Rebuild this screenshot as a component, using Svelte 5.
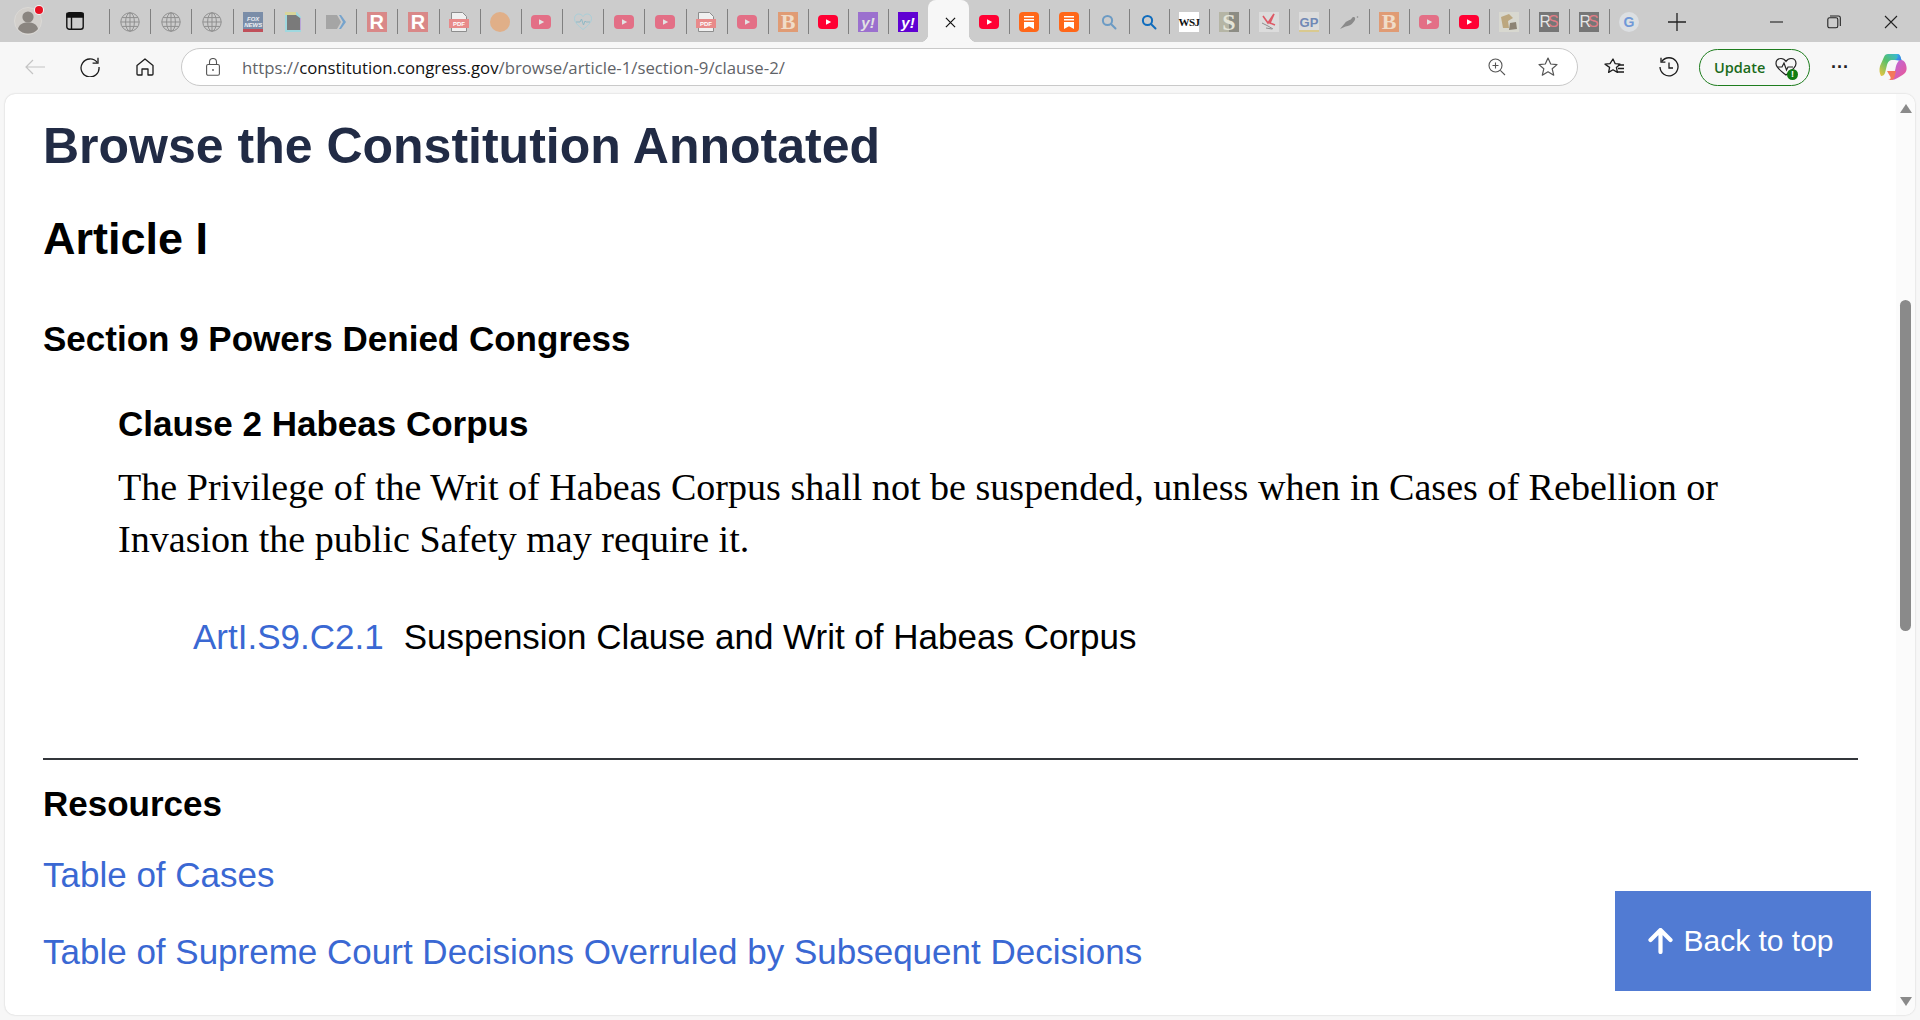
<script lang="ts">
  // kind of favicon for each pinned tab, left to right
  const leftTabs = [
    'globe', 'globe', 'globe', 'fox', 'doc', 'tag', 'r', 'r', 'pdf', 'dot',
    'yt-dim', 'heart', 'yt-dim', 'yt-dim', 'pdf', 'yt-dim',
  ];
  const slimLeft = ['b', 'yt', 'yahoo-dim', 'yahoo'];
  const rightTabs = [
    'yt', 'save', 'save', 'search-dim', 'search', 'wsj', 's', 'bird', 'gp', 'pigeon',
    'b', 'yt-dim', 'yt', 'photo', 'rs', 'rs', 'g',
  ];
</script>

{#snippet favicon(kind: string)}
  {#if kind === 'globe'}
    <svg class="fav" viewBox="0 0 20 20" fill="none" stroke="#8f8f8f" stroke-width="1">
      <circle cx="10" cy="10" r="9.2" />
      <ellipse cx="10" cy="10" rx="4.4" ry="9.2" />
      <path d="M.8 10h18.4M2 5.6h16M2 14.4h16M10 .8v18.4" />
    </svg>
  {:else if kind === 'fox'}
    <span class="fav fox"><i>FOX</i><i>NEWS</i></span>
  {:else if kind === 'doc'}
    <svg class="fav" viewBox="0 0 20 20">
      <path d="M1 0h12l4 5v15H1z" fill="#9fd8df" />
      <path d="M1 0h11v3H1z" fill="#d8d59a" />
      <path d="M3 3h9l4 3v12H3z" fill="#7a7a7a" />
      <path d="M16 6v12h1V6z" fill="#b9a6d8" />
    </svg>
  {:else if kind === 'tag'}
    <svg class="fav" viewBox="0 0 20 20">
      <path d="M0 3h11l4 7-4 7H0z" fill="#a5a5a5" />
      <path d="M13 3h2l5 7-5 7h-2l4-7z" fill="#76a3cc" />
    </svg>
  {:else if kind === 'r'}
    <span class="fav letter red">R</span>
  {:else if kind === 'pdf'}
    <svg class="fav" viewBox="0 0 20 20">
      <path d="M2.5.5h11l4 4v15h-15z" fill="#f0f0f0" stroke="#8d8d8d" />
      <path d="M0 7h20v9H0z" fill="#e88a8a" />
      <text x="10" y="14.2" text-anchor="middle" class="pdf-text">PDF</text>
    </svg>
  {:else if kind === 'dot'}
    <span class="fav dot"></span>
  {:else if kind === 'yt' || kind === 'yt-dim'}
    <svg class="fav" class:dim={kind === 'yt-dim'} viewBox="0 0 20 20">
      <rect x="0" y="3" width="20" height="14" rx="4" fill="#ff0033" />
      <path d="M8 7.2l5.2 2.8L8 12.8z" fill="#fff" />
    </svg>
  {:else if kind === 'heart'}
    <svg class="fav" viewBox="0 0 20 20" fill="none" stroke="#a9cfd9" stroke-width="1">
      <path d="M10 17.500C5 13.500 1.500 10.500 1.500 6.500 1.500 3.500 3.500 2 5.800 2 7.500 2 9 3 10 4.500 11 3 12.500 2 14.200 2 16.500 2 18.500 3.500 18.500 6.500 18.500 10.500 15 13.500 10 17.500z" />
      <path d="M3 10h4l1.500-3 2 6 1.500-4 1 1h4" stroke="#8fb9c6" />
    </svg>
  {:else if kind === 'b'}
    <span class="fav letter rumble">B</span>
  {:else if kind === 'yahoo' || kind === 'yahoo-dim'}
    <span class="fav yahoo" class:dim={kind === 'yahoo-dim'}>y!</span>
  {:else if kind === 'save'}
    <svg class="fav" viewBox="0 0 20 20">
      <rect width="20" height="20" rx="4" fill="#ff6719" />
      <path d="M5 4h10v1.500H5zM5 7h10v1.500H5zM5 10h10v7l-5-2.800L5 17z" fill="#fff" />
    </svg>
  {:else if kind === 'search' || kind === 'search-dim'}
    <svg class="fav" class:faded={kind === 'search-dim'} viewBox="0 0 20 20" fill="none" stroke="#0f6cbd" stroke-width="2">
      <circle cx="8.500" cy="8.500" r="4.600" />
      <path d="M12 12l4.500 4.500" stroke-linecap="round" />
    </svg>
  {:else if kind === 'wsj'}
    <span class="fav wsj">WSJ</span>
  {:else if kind === 's'}
    <span class="fav esse">S</span>
  {:else if kind === 'bird'}
    <svg class="fav bird" viewBox="0 0 20 20" fill="none">
      <path d="M4 4l5 7 6-9-4 9 5 2" stroke="#dd5a66" stroke-width="1.600" />
      <path d="M3 11l6 3 5 3M7 16l6 1" stroke="#8f8f8f" stroke-width="1" />
    </svg>
  {:else if kind === 'gp'}
    <span class="fav gp">GP</span>
  {:else if kind === 'pigeon'}
    <svg class="fav" viewBox="0 0 20 20" fill="#8a8a8a">
      <path d="M1 17l5-6c2-3 5-2 7-5 .5-1 2.500-1.500 3-.2.5 1.500-.3 3-1.500 4.200-2 3-5 4-8 4.500z" />
      <circle cx="18.500" cy="5" r=".8" />
    </svg>
  {:else if kind === 'photo'}
    <svg class="fav" viewBox="0 0 20 20">
      <rect width="20" height="20" fill="#d8d8d0" />
      <path d="M2 5l8-3 4 4-5 3 1 7H4z" fill="#bca77f" />
      <path d="M11 11l6-1 1 7-8 1z" fill="#8d8474" />
    </svg>
  {:else if kind === 'rs'}
    <span class="fav rs">R<em>S</em></span>
  {:else if kind === 'g'}
    <span class="fav goog">G</span>
  {/if}
{/snippet}

<div class="browser">
  <header class="tabstrip">
    <div class="profile">
      <svg viewBox="0 0 28 28" width="28" height="28">
        <circle cx="14" cy="14" r="13.500" fill="#d2cfcb" stroke="#dbd9d6" />
        <circle cx="14" cy="10" r="5.600" fill="#8a8580" />
        <path d="M4 22c1-5 5-6.500 10-6.500S23 17 24 22c-2.500 3-6 4.500-10 4.500S6.500 25 4 22z" fill="#8a8580" />
      </svg>
      <span class="badge"></span>
    </div>
    <div class="tab-switch">
      <svg viewBox="0 0 18 18" width="18" height="18" fill="none" stroke="#111" stroke-width="1.400">
        <rect x=".8" y=".8" width="16.400" height="16.400" rx="2.500" />
        <path d="M1 1.500h16v3.500H1z" fill="#111" />
        <path d="M5.500 5v12" />
      </svg>
    </div>

    <div class="tabs">
      {#each leftTabs as kind}
        <div class="tab">{@render favicon(kind)}</div>
      {/each}
      {#each slimLeft as kind}
        <div class="tab slim">{@render favicon(kind)}</div>
      {/each}
      <div class="tab-active">
        <svg viewBox="0 0 12 12" width="11" height="11" stroke="#111" stroke-width="1.300">
          <path d="M1 1l10 10M11 1L1 11" />
        </svg>
      </div>
      {#each rightTabs as kind}
        <div class="tab slim">{@render favicon(kind)}</div>
      {/each}
    </div>

    <div class="new-tab">
      <svg viewBox="0 0 18 18" width="18" height="18" stroke="#222" stroke-width="1.300">
        <path d="M9 0v18M0 9h18" />
      </svg>
    </div>
    <div class="window-controls">
      <svg viewBox="0 0 14 14" width="14" height="14" stroke="#222" stroke-width="1.100"><path d="M0 7h13" /></svg>
      <svg viewBox="0 0 14 14" width="14" height="14" fill="none" stroke="#222" stroke-width="1.100">
        <rect x=".8" y="2.800" width="10" height="10" rx="1.800" />
        <path d="M3 1h8.500A1.800 1.800 0 0 1 13.300 2.800V11" />
      </svg>
      <svg viewBox="0 0 14 14" width="14" height="14" stroke="#222" stroke-width="1.100"><path d="M1 1l12 12M13 1L1 13" /></svg>
    </div>
  </header>

  <nav class="toolbar">
    <div class="tool back">
      <svg viewBox="0 0 20 16" width="20" height="16" fill="none" stroke="#c4c4c4" stroke-width="1.200"><path d="M20 8H1M8 1L1 8l7 7" /></svg>
    </div>
    <div class="tool reload">
      <svg viewBox="0 0 20 20" width="20" height="20" fill="none" stroke="#1c1c1c" stroke-width="1.300">
        <path d="M17.200 5.500A9 9 0 1 0 19 10" />
        <path d="M18 .8v5.400h-5.400" />
      </svg>
    </div>
    <div class="tool home">
      <svg viewBox="0 0 18 18" width="18" height="18" fill="none" stroke="#1c1c1c" stroke-width="1.300">
        <path d="M1 7.500L9 1l8 6.500V16a1 1 0 0 1-1 1h-4v-6H6v6H2a1 1 0 0 1-1-1z" stroke-linejoin="round" />
      </svg>
    </div>

    <div class="address">
      <svg class="lock" viewBox="0 0 14 18" width="14" height="18" fill="none" stroke="#555" stroke-width="1.100">
        <rect x=".6" y="6.500" width="12.800" height="10.800" rx="1.500" />
        <path d="M3.500 6.500V4a3.500 3.500 0 0 1 7 0v2.500" />
        <circle cx="7" cy="12" r=".9" fill="#555" stroke="none" />
      </svg>
      <span class="url"><span class="scheme">https://</span><span class="host">constitution.congress.gov</span><span class="scheme">/browse/article-1/section-9/clause-2/</span></span>
      <svg class="zoom-icon" viewBox="0 0 18 18" width="18" height="18" fill="none" stroke="#555" stroke-width="1.100">
        <circle cx="7.500" cy="7.500" r="6.500" />
        <path d="M12.300 12.300L17 17M4.500 7.500h6M7.500 4.500v6" />
      </svg>
      <svg class="star" viewBox="0 0 20 20" width="20" height="20" fill="none" stroke="#555" stroke-width="1.200">
        <path d="M10 1l2.700 6 6.300.6-4.800 4.200 1.500 6.400L10 14.800l-5.700 3.400 1.500-6.400L1 7.600 7.300 7z" stroke-linejoin="round" />
      </svg>
    </div>

    <div class="tool favs">
      <svg viewBox="0 0 22 20" width="22" height="20" fill="none" stroke="#1c1c1c" stroke-width="1.300">
        <path d="M9 2l2.200 4.700 4.800.5-3.600 3.200 1 5-4.400-2.600-4.400 2.600 1-5L1 7.200l5-.5z" stroke-linejoin="round" />
        <path d="M14 8h6M14 11.500h6M13 15h7" />
      </svg>
    </div>
    <div class="tool history">
      <svg viewBox="0 0 20 20" width="20" height="20" fill="none" stroke="#1c1c1c" stroke-width="1.300">
        <path d="M2.700 4.500A9 9 0 1 1 1 10" />
        <path d="M2 .8v4.400h4.400M10 5.500V11h4" />
      </svg>
    </div>
    <div class="update">
      <span>Update</span>
      <span class="update-icon">
        <svg viewBox="0 0 22 20" width="22" height="20" fill="none" stroke="#222" stroke-width="1.200">
          <path d="M11 18C6 14 1 11 1 6.500 1 3.500 3 1.500 6 1.500c2 0 3.800 1 5 2.800 1.200-1.800 3-2.800 5-2.800 3 0 5 2 5 5C21 11 16 14 11 18z" />
          <path d="M3 10h4l2-4 2.500 7 1.500-3h5" />
        </svg>
        <span class="alert">!</span>
      </span>
    </div>
    <div class="more">···</div>
    <div class="copilot">
      <svg viewBox="0 0 28 28" width="28" height="28">
        <defs>
          <linearGradient id="cop-a" x1="0" y1="0" x2="1" y2="1">
            <stop offset="0" stop-color="#2fb8f0" />
            <stop offset="1" stop-color="#3f6fe0" />
          </linearGradient>
          <linearGradient id="cop-b" x1="0" y1="1" x2="1" y2="0">
            <stop offset="0" stop-color="#f2c53d" />
            <stop offset=".5" stop-color="#57c06a" />
            <stop offset="1" stop-color="#2fb8f0" />
          </linearGradient>
          <linearGradient id="cop-c" x1="0" y1="0" x2="1" y2="1">
            <stop offset="0" stop-color="#b16be8" />
            <stop offset="1" stop-color="#f0568f" />
          </linearGradient>
        </defs>
        <path d="M9 1h9c2 0 3 1 3.500 3l1 3H14C10 7 9 9 8 12l-2 8c-.6 2-2 3-4 3C.5 20 0 17 1 13L5 4c.7-2 2-3 4-3z" fill="url(#cop-b)" />
        <path d="M18 1c2 0 3 1 3.500 3l1.500 5c-3-2-7-2-9-2 3 0 6-2 4-6z" fill="url(#cop-a)" />
        <path d="M22 7c3 0 5 3 5.500 7 .5 4-1 6-4 8l-5 3c-2 1-4 2-6 2h-2c2 0 3.500-1.500 4-3.500l2-8C17 12 19 7 22 7z" fill="url(#cop-c)" />
        <path d="M8 18h9l-1.500 6c-.5 2-2 3-4 3H9c2 0 3-1 2.500-3z" fill="#f3795b" />
      </svg>
    </div>
  </nav>

  <div class="viewport">
    <main class="page">
      <h1>Browse the Constitution Annotated</h1>
      <h2>Article I</h2>
      <h3>Section 9 Powers Denied Congress</h3>
      <section class="clause">
        <h4>Clause 2 Habeas Corpus</h4>
        <p>The Privilege of the Writ of Habeas Corpus shall not be suspended, unless when in Cases of Rebellion or Invasion the public Safety may require it.</p>
        <div class="essay">
          <a href="#essay">ArtI.S9.C2.1</a>
          <span>Suspension Clause and Writ of Habeas Corpus</span>
        </div>
      </section>
      <hr />
      <h5>Resources</h5>
      <a class="resource first" href="#cases">Table of Cases</a>
      <a class="resource" href="#overruled">Table of Supreme Court Decisions Overruled by Subsequent Decisions</a>
    </main>

    <aside class="scrollbar">
      <span class="arrow up"></span>
      <span class="thumb"></span>
      <span class="arrow down"></span>
    </aside>

    <a class="back-to-top" href="#top">
      <svg viewBox="0 0 26 26" width="27" height="26" fill="none" stroke="#fff" stroke-width="4.200" stroke-linecap="round" stroke-linejoin="round">
        <path d="M13 24V3M3 12l10-10 10 10" />
      </svg>
      Back to top
    </a>
  </div>
</div>

<style>
  :global(body) {
    margin: 0;
    overflow: hidden;
  }

  .browser {
    display: flex;
    flex-direction: column;
    width: 1920px;
    height: 1020px;
    background: #f7f7f7;
    font-family: 'Liberation Sans', Arial, sans-serif;
  }

  /* tab strip */
  .tabstrip {
    display: flex;
    align-items: stretch;
    height: 42px;
    background: #cccccc;
  }

  .profile {
    position: relative;
    display: flex;
    align-items: center;
    justify-content: center;
    width: 56px;
    flex-shrink: 0;
  }

  .badge {
    position: absolute;
    top: 6px;
    left: 35px;
    width: 8px;
    height: 8px;
    border-radius: 50%;
    background: #e81123;
    box-shadow: 0 0 0 1px #f2f2f2;
  }

  .tab-switch {
    display: flex;
    align-items: center;
    width: 53px;
    padding-left: 10px;
    box-sizing: border-box;
    flex-shrink: 0;
  }

  .tabs {
    display: flex;
    align-items: stretch;
    flex-shrink: 0;
  }

  .tab {
    position: relative;
    display: flex;
    align-items: center;
    justify-content: center;
    width: 41.2px;
    flex-shrink: 0;
    box-sizing: border-box;
    padding-top: 2px;
  }

  .tab::before {
    content: '';
    position: absolute;
    left: 0;
    top: 9px;
    bottom: 8px;
    width: 1px;
    background: #808080;
  }

  .tab.slim {
    width: 40px;
  }

  .tab-active + .tab::before {
    display: none;
  }

  .tab-active {
    position: relative;
    display: flex;
    align-items: center;
    justify-content: center;
    width: 41px;
    flex-shrink: 0;
    background: #f7f7f7;
    border-radius: 8px 8px 0 0;
    padding: 2px 0 0 3px;
    box-sizing: border-box;
  }

  /* flared bottom corners of the selected tab */
  .tab-active::before,
  .tab-active::after {
    content: '';
    position: absolute;
    bottom: 0;
    width: 8px;
    height: 8px;
  }

  .tab-active::before {
    left: -8px;
    background: radial-gradient(circle at 0 0, transparent 8px, #f7f7f7 8.5px);
  }

  .tab-active::after {
    right: -8px;
    background: radial-gradient(circle at 100% 0, transparent 8px, #f7f7f7 8.5px);
  }

  .fav {
    display: block;
    width: 20px;
    height: 20px;
    flex-shrink: 0;
  }

  .dim {
    opacity: 0.45;
  }

  .faded {
    opacity: 0.5;
  }

  .fox {
    display: flex;
    flex-direction: column;
    align-items: center;
    justify-content: center;
    background: linear-gradient(#7a8da8 0 84%, #c0505a 84%);
    color: #eef1f5;
    font: italic 700 6px/6.5px 'Liberation Sans', sans-serif;
  }

  .fox i {
    display: block;
  }

  .letter {
    display: flex;
    align-items: center;
    justify-content: center;
    color: #fff;
    font-weight: 700;
    font-size: 20px;
  }

  .red {
    background: #d98888;
  }

  .rumble {
    background: #e09b74;
    color: #f0dcc8;
    font-family: 'Liberation Serif', serif;
    font-size: 22px;
  }

  .dot {
    border-radius: 50%;
    background: #e0af88;
  }

  .yahoo {
    display: flex;
    align-items: center;
    justify-content: center;
    background: #6001d2;
    color: #fff;
    font: italic 700 15px/1 'Liberation Sans', sans-serif;
  }

  .wsj {
    display: flex;
    align-items: center;
    justify-content: center;
    background: #fff;
    color: #111;
    font: 700 11px/1 'Liberation Serif', serif;
    letter-spacing: -0.5px;
  }

  .esse {
    display: flex;
    align-items: center;
    justify-content: center;
    background: linear-gradient(90deg, #b5b5a5 50%, #8c8c84 50%);
    color: #e4e4d8;
    font: 700 24px/1 'Liberation Serif', serif;
  }

  .bird {
    background: #dcdcdc;
  }

  .gp {
    display: flex;
    align-items: center;
    justify-content: center;
    background: linear-gradient(#dcdcdc 0 90%, #d9c98f 90%);
    color: #7088b5;
    font: 700 13px/1 'Liberation Sans', sans-serif;
  }

  .rs {
    display: flex;
    align-items: center;
    justify-content: center;
    background: #767676;
    color: #e6e6e6;
    font: 400 16px/1 'Liberation Sans', sans-serif;
  }

  .rs em {
    font-style: normal;
    color: #e07c86;
    margin-left: -3px;
  }

  .goog {
    display: flex;
    align-items: center;
    justify-content: center;
    border-radius: 50%;
    background: #dcdfe2;
    color: #6f98d8;
    font: 700 14px/1 'Liberation Sans', sans-serif;
  }

  .pdf-text {
    font: 700 6px 'Liberation Sans', sans-serif;
    fill: #fff;
  }

  .new-tab {
    display: flex;
    align-items: center;
    margin-left: 19px;
    padding-top: 2px;
  }

  .window-controls {
    display: flex;
    align-items: center;
    gap: 43px;
    margin-left: auto;
    padding: 2px 22px 0 0;
  }

  /* toolbar */
  .toolbar {
    display: flex;
    align-items: center;
    height: 50px;
    flex-shrink: 0;
    box-sizing: border-box;
    background: #f7f7f7;
  }

  .tool {
    display: flex;
    align-items: center;
    justify-content: center;
    flex-shrink: 0;
  }

  .back {
    width: 20px;
    margin-left: 25px;
  }

  .reload {
    width: 20px;
    margin-left: 35px;
  }

  .home {
    width: 18px;
    margin-left: 36px;
  }

  .address {
    display: flex;
    align-items: center;
    width: 1397px;
    height: 38px;
    flex-shrink: 0;
    box-sizing: border-box;
    margin-left: 27px;
    padding: 0 19px 0 24px;
    background: #fff;
    border: 1px solid #c9c9c9;
    border-radius: 19px;
  }

  .lock {
    flex-shrink: 0;
  }

  .url {
    margin-left: 22px;
    font: 16.750px 'Open Sans', sans-serif;
    white-space: nowrap;
  }

  .scheme {
    color: #5f6368;
  }

  .host {
    color: #111;
  }

  .zoom-icon {
    margin-left: auto;
  }

  .star {
    margin-left: 32px;
  }

  .favs {
    width: 22px;
    margin-left: 26px;
  }

  .history {
    width: 20px;
    margin-left: 33px;
  }

  .update {
    display: flex;
    align-items: center;
    justify-content: space-between;
    width: 111px;
    height: 37px;
    flex-shrink: 0;
    box-sizing: border-box;
    margin-left: 20px;
    padding: 0 12px 0 14px;
    border: 1.500px solid #1e7d1e;
    border-radius: 19px;
    color: #1b6b1b;
    font: 600 14.500px 'Open Sans', sans-serif;
  }

  .update-icon {
    position: relative;
    display: flex;
  }

  .alert {
    position: absolute;
    right: -1px;
    bottom: -3px;
    width: 11px;
    height: 11px;
    border-radius: 50%;
    background: #107c10;
    color: #fff;
    font: 700 9px/11px 'Liberation Sans', sans-serif;
    text-align: center;
  }

  .more {
    margin-left: 21px;
    width: 18px;
    color: #222;
    font: 700 18px/1 'Liberation Sans', sans-serif;
    text-align: center;
    flex-shrink: 0;
  }

  .copilot {
    display: flex;
    margin-left: 30px;
    flex-shrink: 0;
  }

  /* page area */
  .viewport {
    position: relative;
    display: flex;
    flex: 1;
    min-height: 0;
    margin: 2px 5px 5px 5px;
    background: #fff;
    border-radius: 10px;
    box-shadow: 0 0 2px rgba(0, 0, 0, 0.2);
    overflow: hidden;
  }

  .page {
    flex: 1;
    min-width: 0;
    box-sizing: border-box;
    padding: 0 38px;
    color: #000;
  }

  h1 {
    margin: 23px 0 0;
    color: #212b45;
    font-size: 50px;
    line-height: 58px;
    font-weight: 700;
  }

  h2 {
    margin: 39px 0 0;
    font-size: 45px;
    line-height: 50px;
    font-weight: 700;
  }

  h3 {
    margin: 55px 0 0;
    font-size: 35px;
    line-height: 40px;
    font-weight: 700;
  }

  .clause {
    padding-left: 75px;
  }

  h4 {
    margin: 45px 0 0;
    font-size: 35px;
    line-height: 40px;
    font-weight: 700;
  }

  p {
    margin: 17px 0 0;
    padding-right: 50px;
    font-family: 'Liberation Serif', serif;
    font-size: 38.100px;
    line-height: 52px;
    color: #000;
  }

  .essay {
    display: flex;
    gap: 20px;
    margin: 50px 0 0;
    padding-left: 75px;
    font-size: 35px;
    line-height: 44px;
  }

  a {
    color: #3a68d3;
    text-decoration: none;
  }

  hr {
    margin: 99px 0 0;
    border: 0;
    border-top: 2px solid #33363b;
  }

  h5 {
    margin: 24px 0 0;
    font-size: 35px;
    line-height: 40px;
    font-weight: 700;
  }

  .resource {
    display: block;
    margin-top: 33px;
    font-size: 35px;
    line-height: 44px;
  }

  .resource.first {
    margin-top: 29px;
  }

  .scrollbar {
    position: relative;
    display: flex;
    flex-direction: column;
    align-items: center;
    width: 19px;
    flex-shrink: 0;
    background: #fbfbfb;
  }

  .arrow {
    width: 0;
    height: 0;
    border-left: 6.500px solid transparent;
    border-right: 6.500px solid transparent;
  }

  .arrow.up {
    margin-top: 10px;
    border-bottom: 9px solid #8a8a8a;
  }

  .arrow.down {
    margin-top: auto;
    margin-bottom: 9px;
    border-top: 9px solid #8a8a8a;
  }

  .thumb {
    width: 11px;
    height: 331px;
    margin-top: 187px;
    border-radius: 6px;
    background: #8a8a8a;
  }

  .back-to-top {
    position: absolute;
    left: 1610px;
    top: 797px;
    display: flex;
    align-items: center;
    justify-content: center;
    gap: 9px;
    width: 256px;
    height: 100px;
    box-sizing: border-box;
    padding-right: 5px;
    background: #517bd3;
    color: #fff;
    font-size: 30px;
  }
</style>
